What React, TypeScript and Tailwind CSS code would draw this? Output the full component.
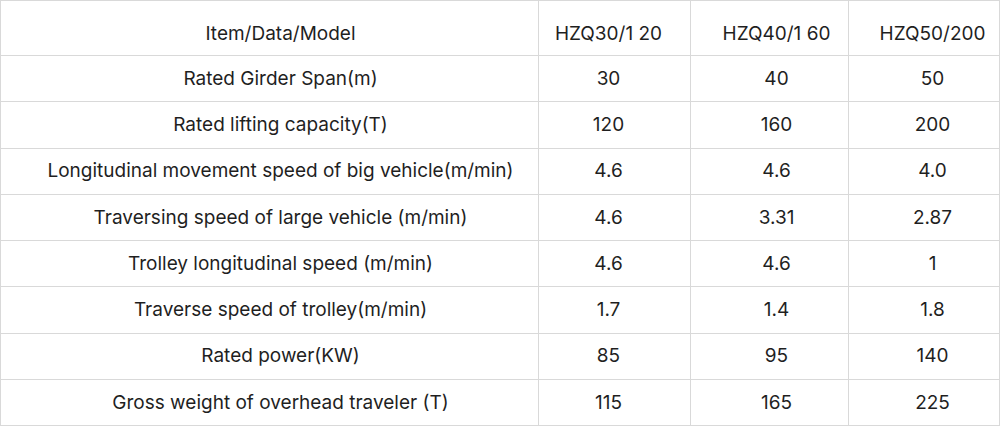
const rows: string[][] = [
  ['Item/Data/Model', 'HZQ30/1 20', 'HZQ40/1 60', 'HZQ50/200'],
  ['Rated Girder Span(m)', '30', '40', '50'],
  ['Rated lifting capacity(T)', '120', '160', '200'],
  ['Longitudinal movement speed of big vehicle(m/min)', '4.6', '4.6', '4.0'],
  ['Traversing speed of large vehicle (m/min)', '4.6', '3.31', '2.87'],
  ['Trolley longitudinal speed (m/min)', '4.6', '4.6', '1'],
  ['Traverse speed of trolley(m/min)', '1.7', '1.4', '1.8'],
  ['Rated power(KW)', '85', '95', '140'],
  ['Gross weight of overhead traveler (T)', '115', '165', '225'],
];

// text in each column sits a little off the cell centre in the original
const colPad = ['pl-[22px]', 'pr-[12px]', 'pl-[14px]', 'pl-[17px]'];

export default function App() {
  return (
    <div className="w-[1000px] h-[426px] bg-white font-['Inter',sans-serif] text-[19px] text-[#1f1f1f]">
      <div className="grid h-full grid-cols-[538px_152px_158px_151px] grid-rows-[55px_repeat(8,1fr)] border-l border-t border-[#d9d9d9]">
        {rows.map((row, r) =>
          row.map((cell, c) => (
            <div
              key={`${r}-${c}`}
              className={`flex items-center justify-center border-r border-b border-[#d9d9d9] whitespace-nowrap ${colPad[c]} ${r === 0 ? 'pt-[12px]' : 'pt-[1px]'}`}
            >
              {cell}
            </div>
          ))
        )}
      </div>
    </div>
  );
}
